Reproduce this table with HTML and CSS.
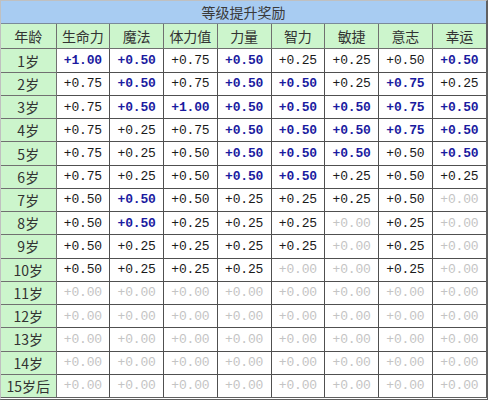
FILE: index.html
```html
<!DOCTYPE html>
<html>
<head>
<meta charset="utf-8">
<link rel="stylesheet" href="styles.css">
</head>
<body>
<div class="frame">
<table class="grid">
<colgroup><col class="c0"><col><col><col><col><col><col><col><col></colgroup>
<tr class="title"><td colspan="9">等级提升奖励</td></tr>
<tr class="head"><td>年龄</td><td>生命力</td><td>魔法</td><td>体力值</td><td>力量</td><td>智力</td><td>敏捷</td><td>意志</td><td>幸运</td></tr>
<tr><th>1岁</th><td class="b">+1.00</td><td class="b">+0.50</td><td>+0.75</td><td class="b">+0.50</td><td>+0.25</td><td>+0.25</td><td>+0.50</td><td class="b">+0.50</td></tr>
<tr><th>2岁</th><td>+0.75</td><td class="b">+0.50</td><td>+0.75</td><td class="b">+0.50</td><td class="b">+0.50</td><td>+0.25</td><td class="b">+0.75</td><td>+0.25</td></tr>
<tr><th>3岁</th><td>+0.75</td><td class="b">+0.50</td><td class="b">+1.00</td><td class="b">+0.50</td><td class="b">+0.50</td><td class="b">+0.50</td><td class="b">+0.75</td><td class="b">+0.50</td></tr>
<tr><th>4岁</th><td>+0.75</td><td>+0.25</td><td>+0.75</td><td class="b">+0.50</td><td class="b">+0.50</td><td class="b">+0.50</td><td class="b">+0.75</td><td class="b">+0.50</td></tr>
<tr><th>5岁</th><td>+0.75</td><td>+0.25</td><td>+0.50</td><td class="b">+0.50</td><td class="b">+0.50</td><td class="b">+0.50</td><td>+0.50</td><td class="b">+0.50</td></tr>
<tr><th>6岁</th><td>+0.75</td><td>+0.25</td><td>+0.50</td><td class="b">+0.50</td><td class="b">+0.50</td><td>+0.25</td><td>+0.50</td><td>+0.25</td></tr>
<tr><th>7岁</th><td>+0.50</td><td class="b">+0.50</td><td>+0.50</td><td>+0.25</td><td>+0.25</td><td>+0.25</td><td>+0.50</td><td class="z">+0.00</td></tr>
<tr><th>8岁</th><td>+0.50</td><td class="b">+0.50</td><td>+0.25</td><td>+0.25</td><td>+0.25</td><td class="z">+0.00</td><td>+0.25</td><td class="z">+0.00</td></tr>
<tr><th>9岁</th><td>+0.50</td><td>+0.25</td><td>+0.25</td><td>+0.25</td><td>+0.25</td><td class="z">+0.00</td><td>+0.25</td><td class="z">+0.00</td></tr>
<tr><th>10岁</th><td>+0.50</td><td>+0.25</td><td>+0.25</td><td>+0.25</td><td class="z">+0.00</td><td class="z">+0.00</td><td>+0.25</td><td class="z">+0.00</td></tr>
<tr><th>11岁</th><td class="z">+0.00</td><td class="z">+0.00</td><td class="z">+0.00</td><td class="z">+0.00</td><td class="z">+0.00</td><td class="z">+0.00</td><td class="z">+0.00</td><td class="z">+0.00</td></tr>
<tr><th>12岁</th><td class="z">+0.00</td><td class="z">+0.00</td><td class="z">+0.00</td><td class="z">+0.00</td><td class="z">+0.00</td><td class="z">+0.00</td><td class="z">+0.00</td><td class="z">+0.00</td></tr>
<tr><th>13岁</th><td class="z">+0.00</td><td class="z">+0.00</td><td class="z">+0.00</td><td class="z">+0.00</td><td class="z">+0.00</td><td class="z">+0.00</td><td class="z">+0.00</td><td class="z">+0.00</td></tr>
<tr><th>14岁</th><td class="z">+0.00</td><td class="z">+0.00</td><td class="z">+0.00</td><td class="z">+0.00</td><td class="z">+0.00</td><td class="z">+0.00</td><td class="z">+0.00</td><td class="z">+0.00</td></tr>
<tr><th>15岁后</th><td class="z">+0.00</td><td class="z">+0.00</td><td class="z">+0.00</td><td class="z">+0.00</td><td class="z">+0.00</td><td class="z">+0.00</td><td class="z">+0.00</td><td class="z">+0.00</td></tr>
</table>
</div>
</body>
</html>
```
FILE: styles.css
```css
html, body {
  margin: 0;
  padding: 0;
  background: #ffffff;
}
.frame {
  width: 488px;
  height: 400px;
  box-sizing: border-box;
  border-top: 1px solid #c0c0c0;
  border-left: 1px solid #c0c0c0;
  border-right: 2px solid #606060;
  border-bottom: 3px double #606060;
  overflow: hidden;
}
.grid {
  width: 100%;
  height: 396px;
  border-collapse: collapse;
  table-layout: fixed;
  font-family: "Liberation Mono", "DejaVu Sans Mono", monospace;
  font-size: 13px;
  letter-spacing: -0.2px;
  color: #1a1a1a;
}
.grid col.c0 { width: 55px; }
.grid td, .grid th {
  border: 1px solid #505050;
  height: 22px;
  padding: 0;
  text-align: center;
  vertical-align: middle;
  font-weight: normal;
  white-space: nowrap;
}
.grid tr:first-child td { border-top: none; }
.grid tr td:first-child, .grid tr th:first-child { border-left: none; }
.grid tr td:last-child { border-right: none; }
.grid tr:last-child td, .grid tr:last-child th { border-bottom: none; }
.grid th {
  background: #ccf5cc;
  font-family: "Noto Sans CJK SC", "Noto Sans", sans-serif;
  font-size: 14px;
  letter-spacing: 0;
  color: #333333;
  border-color: #707070;
}
.title td {
  background: #a8ccf2;
  font-family: "Noto Sans CJK SC", "Noto Sans", sans-serif;
  font-size: 14px;
  letter-spacing: 0;
  color: #3a3a3a;
  height: 22px;
  border-color: #7a8a9a;
}
.head td {
  background: #ccf5cc;
  font-family: "Noto Sans CJK SC", "Noto Sans", sans-serif;
  font-size: 14px;
  letter-spacing: 0;
  color: #333333;
  height: 24px;
  border-color: #707070;
}
.grid td.b {
  color: #1a1aa0;
  font-weight: bold;
}
.grid td.z {
  color: #c4c4c4;
}
```
